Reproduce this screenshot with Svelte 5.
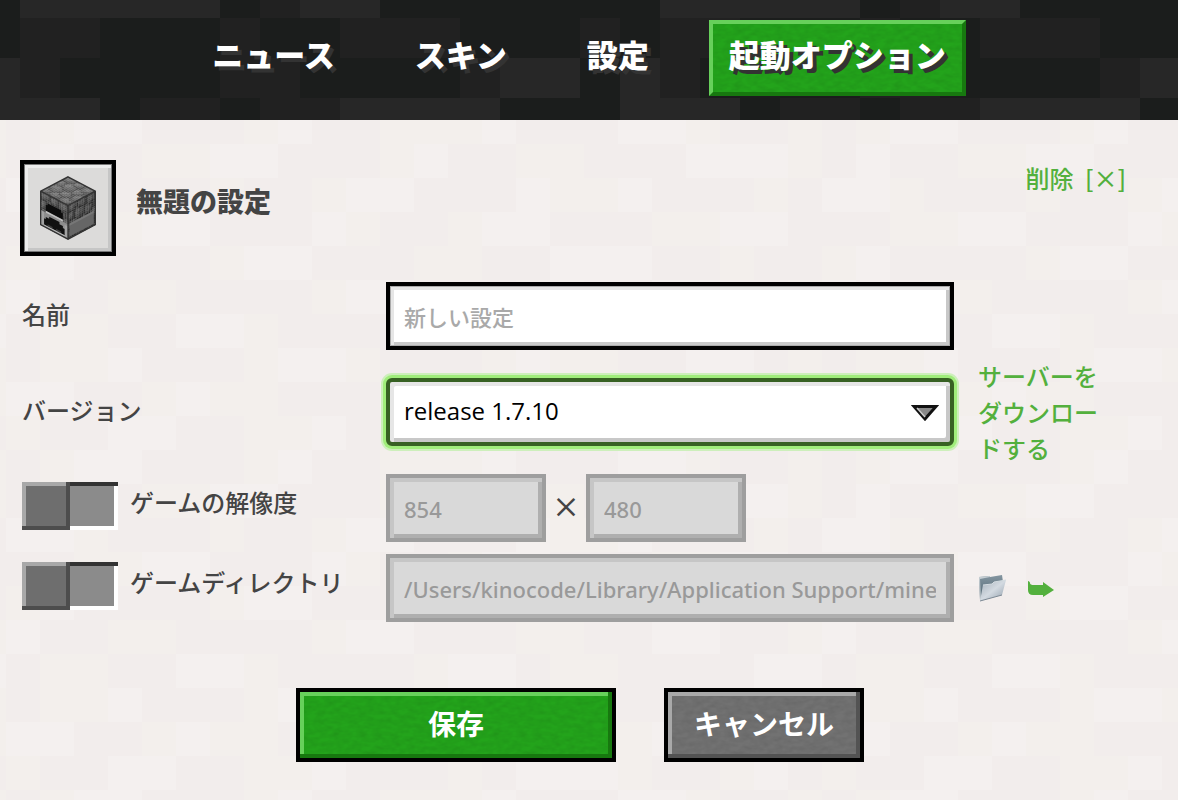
<script lang="ts">
	let name = $state('');
	let version = $state('release 1.7.10');
	let customResolution = $state(false);
	let customDirectory = $state(false);

	const tabs = [
		{ label: 'ニュース', active: false },
		{ label: 'スキン', active: false },
		{ label: '設定', active: false },
		{ label: '起動オプション', active: true },
	];

	// Block patterns, one letter per tile
	const headerRows = [
		'llllldmllddddddd',
		'mmdddmddmmmdddmd',
		'mddddmmddddmlldl',
		'lldmmdmmlllldddl',
	];
	const headerColors = { d: '#1b1d1c', m: '#212121', l: '#272727' };

	const pageRows = [
		'abbcaaabccbaaabcbbaaccab',
		'ccaabcbbaaacbccaabbcaaab',
		'baaccaabbcaaabacccbaabca',
		'abccaaabcaabbbcaaaccbaab',
		'acaabbccaaabcaabbaaacccb',
		'ccbaaabaabccaaacbbcaaaba',
		'aabbccaaacbaabccaaabbcca',
		'bcaaaabccaaabbaacccaabaa',
		'caabbaaaabccaaabbaaccaab',
		'abbaaccbaaaabccabbaaaacc',
	];
	const pageColors = { a: '#f2edec', b: '#f3efec', c: '#f4f0ef' };

	function svgUrl(width: number, height: number, body: string) {
		const svg = `<svg xmlns="http://www.w3.org/2000/svg" width="${width}" height="${height}" shape-rendering="crispEdges">${body}</svg>`;
		return `url("data:image/svg+xml,${encodeURIComponent(svg)}")`;
	}

	function tiles(rows: string[], colors: Record<string, string>, size: number) {
		const rects = rows.flatMap((row, y) =>
			[...row].map(
				(c, x) => `<rect x="${x * size}" y="${y * size}" width="${size}" height="${size}" fill="${colors[c]}"/>`
			)
		);
		return svgUrl(rows[0].length * size, rows.length * size, rects.join(''));
	}

	const headerImage = tiles(headerRows, headerColors, 40);
	const pageImage = tiles(pageRows, pageColors, 34);
	const grain = svgUrl(
		160,
		160,
		'<filter id="n"><feTurbulence type="fractalNoise" baseFrequency=".12 .22" numOctaves="2" stitchTiles="stitch"/>' +
			'<feColorMatrix values="0 0 0 0 0  0 0 0 0 0  0 0 0 0 0  1 0 0 0 -.3"/></filter>' +
			'<rect width="160" height="160" filter="url(#n)" opacity=".14"/>'
	);

	// Cobblestone: h = light stone, s = stone, m = shade, d = seam
	const cobble = [
		'sshhsdsshsdmsssd',
		'shhssdhhssdshhsm',
		'mssmddsssmdsshsm',
		'ddddmsdddddmsmdd',
		'shsdshhssdssdddm',
		'hhsdhhsssdhhssdm',
		'ssmdssssmdhssmdd',
		'mddddsmmddssmdss',
		'dsshsddddsdddshh',
		'shhhssdshhsddhss',
		'sssssmdhhssmdssm',
		'dmssmddsssmddmmd',
		'sddddshddddshddd',
		'hssdshhssdshhssd',
		'ssmdsssmmdssssmd',
		'mmdddmmddddmmmdd',
	];
	const stoneLevels = { h: 40, s: 26, m: 12, d: 0 };

	function stone(base: number) {
		return cobble.flatMap((row, y) =>
			[...row].map((c, x) => {
				const v = base + stoneLevels[c as keyof typeof stoneLevels];
				return { x, y, fill: `rgb(${v},${v},${v})` };
			})
		);
	}

	const faces = [
		{ matrix: 'matrix(5.125 2.6875 -5.125 2.6875 82 0)', cells: stone(82) },
		{ matrix: 'matrix(5.125 2.6875 0 6.3125 0 43)', cells: stone(58) },
		{ matrix: 'matrix(5.125 -2.6875 0 6.3125 82 86)', cells: stone(46) },
	];
</script>

<div class="page" style:background-image={pageImage}>
	<header style:background-image={headerImage}>
		<nav>
			{#each tabs as tab}
				<a href="#{tab.label}" class:active={tab.active} style:background-image={tab.active ? grain : null}>{tab.label}</a>
			{/each}
		</nav>
	</header>

	<main>
		<div class="title">
			<button class="block" aria-label="アイコン">
				<svg viewBox="-2 -2 168 191" width="56" height="64">
					{#each faces as face}
						<g transform={face.matrix}>
							{#each face.cells as cell}
								<rect x={cell.x} y={cell.y} width="1.1" height="1.1" fill={cell.fill} />
							{/each}
						</g>
					{/each}
					<g transform={faces[1].matrix}>
						<path d="M0 9H16V16H0Z" fill="#8d8d8d" />
						<path d="M0 9H2V16H0ZM14 10H16V16H14Z" fill="#a2a2a2" />
						<path d="M3 8V5H4V4H12V5H13V8Z" fill="#0d0d0d" />
						<path d="M3 8H13V9H3Z" fill="#c2c2c2" />
						<path d="M2 15V12H3V11H5V10H11V11H13V12H14V15Z" fill="#111" />
						<path d="M4 15V14H7V15ZM9 15V14H12V15Z" fill="#3a3a3a" />
						<path d="M2 15H14V16H2Z" fill="#b8b8b8" />
					</g>
					<g transform={faces[2].matrix}>
						<path d="M1 9H15V15H1Z" fill="#666" />
						<path d="M1 9H15V10H1Z" fill="#777" />
					</g>
					<path d="M82 0L164 43V143L82 187L0 143V43ZM0 43L82 86L164 43M82 86V187" fill="none" stroke="#333" stroke-width="4" />
				</svg>
			</button>
			<h1>無題の設定</h1>
			<a class="delete" href="#delete">削除 <span>[×]</span></a>
		</div>

		<form>
			<label for="name">名前</label>
			<input id="name" type="text" placeholder="新しい設定" bind:value={name} />
			<span></span>

			<label for="version">バージョン</label>
			<select id="version" bind:value={version}>
				<option>release 1.7.10</option>
			</select>
			<a class="side download" href="#download">サーバーをダウンロードする</a>

			<label class="toggle">
				<input type="checkbox" bind:checked={customResolution} />
				ゲームの解像度
			</label>
			<div class="resolution">
				<input type="text" placeholder="854" aria-label="幅" disabled={!customResolution} />
				<span>×</span>
				<input type="text" placeholder="480" aria-label="高さ" disabled={!customResolution} />
			</div>
			<span></span>

			<label class="toggle">
				<input type="checkbox" bind:checked={customDirectory} />
				ゲームディレクトリ
			</label>
			<input
				type="text"
				placeholder="/Users/kinocode/Library/Application Support/minecraft"
				aria-label="ゲームディレクトリ"
				disabled={!customDirectory}
			/>
			<div class="side icons">
				<button type="button" aria-label="フォルダー">
					<svg viewBox="0 0 28 28" width="28" height="28">
						<defs>
							<linearGradient id="back" x2="0" y2="1">
								<stop offset="0" stop-color="#8496a1" />
								<stop offset="1" stop-color="#4d626e" />
							</linearGradient>
							<linearGradient id="front" x2="1" y2="1">
								<stop offset="0" stop-color="#a4afb9" />
								<stop offset=".5" stop-color="#d3dae1" />
								<stop offset="1" stop-color="#8e9ba8" />
							</linearGradient>
						</defs>
						<path d="M1 3L11 2L12 3L24 1L25 8L2 26Z" fill="url(#back)" />
						<path d="M1 3L11 2L12 3L2 5L3 26L2 26Z" fill="#c5ced3" />
						<path d="M5 11L14 10L16 8L28 6L24 21L2 27Z" fill="url(#front)" />
						<path d="M5 11L14 10L16 8L28 6" fill="none" stroke="#d3dbe0" />
						<path d="M2 27L24 21" stroke="#7d8994" />
					</svg>
				</button>
				<button type="button" aria-label="開く">
					<svg viewBox="0 0 28 28" width="28" height="28">
						<path d="M2 7C3 7 4 8 4 9Q4 11 8 11H17V8L28 16L17 23V21H7Q2 21 2 16Z" fill="#53b03d" />
					</svg>
				</button>
			</div>
		</form>

		<div class="actions">
			<button class="save" style:background-image={grain}>保存</button>
			<button class="cancel" style:background-image={grain}>キャンセル</button>
		</div>
	</main>
</div>

<style>
	:global(body) {
		margin: 0;
	}

	.page {
		min-height: 100vh;
		background-position: 6px 8px;
		font-family: 'Noto Sans CJK JP', sans-serif;
		font-size: 24px;
		font-weight: 500;
		color: #444;
	}

	header {
		padding: 20px 20px 24px 0;
		background-position: 20px -22px;
	}

	nav {
		display: flex;
		justify-content: center;
		gap: 40px;
	}

	nav a {
		box-sizing: border-box;
		height: 76px;
		padding: 0 16px;
		border: 4px solid transparent;
		color: #fff;
		font-size: 31px;
		font-weight: 900;
		line-height: 60px;
		text-decoration: none;
		text-shadow: 4px 4px #333;
	}

	nav a.active {
		background-color: #23a41b;
		border-color: #67d05b #17780f #17780f #67d05b;
		background-origin: border-box;
	}

	main {
		padding: 40px 20px;
	}

	.title {
		display: flex;
		align-items: flex-start;
		gap: 20px;
		margin-bottom: 26px;
	}

	.block {
		width: 96px;
		height: 96px;
		padding: 0;
		border: 4px solid #000;
		background: #dcdbda;
		box-shadow: inset 0 0 0 1px #777, inset 4px 4px #ececec, inset -4px -4px #c6c6c6;
	}

	.block svg {
		display: block;
		margin: auto;
	}

	h1 {
		margin: 0;
		font-size: 27px;
		font-weight: 900;
		line-height: 82px;
	}

	a {
		color: #53b03d;
		font-weight: 500;
		text-decoration: none;
	}

	.delete {
		margin-left: auto;
		padding-right: 32px;
		line-height: 36px;
	}

	.delete span {
		margin-left: 6px;
	}

	form {
		display: grid;
		grid-template-columns: 364fr 568fr 204fr;
		align-items: center;
		row-gap: 8px;
		padding-left: 2px;
	}

	label {
		padding-bottom: 6px;
	}

	input[type='text'],
	select {
		box-sizing: border-box;
		width: 100%;
		height: 68px;
		padding: 2px 14px 0;
		border: 4px solid #000;
		border-radius: 0;
		outline: 0;
		background: #fff;
		box-shadow: inset 0 0 0 1px #aaa, inset 4px 4px #e6e6e6, inset -4px -4px #c8c8c8;
		color: #000;
		font-family: 'Noto Sans', 'Noto Sans CJK JP', sans-serif;
		font-size: 22px;
		font-weight: 500;
	}

	input::placeholder {
		color: #a9a9a9;
		opacity: 1;
	}

	input[type='text']:disabled {
		border-color: #9e9e9e;
		background: #d9d9d9;
		box-shadow: inset 4px 4px #c6c6c6, inset -4px -4px #afafaf;
	}

	input:disabled::placeholder {
		color: #999;
	}

	select {
		appearance: none;
		padding: 0 14px 4px;
		border-color: #376123;
		border-radius: 6px;
		background: #fff url("data:image/svg+xml,%3Csvg xmlns='http://www.w3.org/2000/svg' width='28' height='22'%3E%3Cpath d='M3 5.5H25L14 18Z' fill='%23888' stroke='%23111' stroke-width='3'/%3E%3Cpath d='M6 7L14 16' stroke='%23ccc' stroke-width='1.5'/%3E%3C/svg%3E") no-repeat right 11px center;
		box-shadow: inset 4px 4px #e6e6e6, inset -4px -4px #c8c8c8, 0 0 0 3px #a0ed7b, 0 0 0 5px #cdefbb;
		font-family: 'Open Sans', sans-serif;
		font-size: 24px;
		font-weight: 400;
	}

	.side {
		padding-left: 24px;
	}

	.download {
		max-width: 130px;
		line-height: 36px;
	}

	.toggle {
		display: flex;
		align-self: start;
		gap: 12px;
		padding: 8px 0 0;
		line-height: 40px;
	}

	.toggle input {
		appearance: none;
		flex: none;
		width: 96px;
		height: 48px;
		margin: 0;
		background:
			linear-gradient(#4d4d4d, #4d4d4d) 44px 0 / 4px 48px no-repeat,
			linear-gradient(#4d4d4d, #4d4d4d) 0 44px / 48px 4px no-repeat,
			linear-gradient(#a8a8a8, #a8a8a8) 0 0 / 48px 4px no-repeat,
			linear-gradient(#a8a8a8, #a8a8a8) 0 0 / 4px 48px no-repeat,
			linear-gradient(#333, #333) 48px 0 / 48px 4px no-repeat,
			linear-gradient(#fff, #fff) 92px 4px / 4px 44px no-repeat,
			linear-gradient(#fff, #fff) 48px 44px / 48px 4px no-repeat,
			linear-gradient(90deg, #6e6e6e 50%, #8b8b8b 50%);
	}

	.resolution {
		display: flex;
		padding-bottom: 4px;
	}

	.resolution input[type='text'] {
		width: 160px;
	}

	.resolution span {
		width: 40px;
		font-size: 28px;
		line-height: 64px;
		text-align: center;
	}

	.icons {
		display: flex;
		gap: 20px;
	}

	.icons button {
		padding: 0;
		border: 0;
		background: none;
	}

	.icons svg {
		display: block;
	}

	.actions {
		display: flex;
		justify-content: center;
		gap: 48px;
		padding: 66px 18px 0 0;
	}

	.actions button {
		height: 74px;
		padding: 0 0 4px;
		border: 4px solid #000;
		color: #fff;
		font: 700 28px 'Noto Sans CJK JP', sans-serif;
	}

	.actions .save {
		width: 320px;
		background-color: #23a41b;
		box-shadow: inset -4px -4px #17780f, inset 4px 4px #67d05b;
	}

	.actions .cancel {
		width: 200px;
		background-color: #727272;
		box-shadow: inset -4px -4px #535353, inset 4px 4px #a9a9a9;
	}
</style>
